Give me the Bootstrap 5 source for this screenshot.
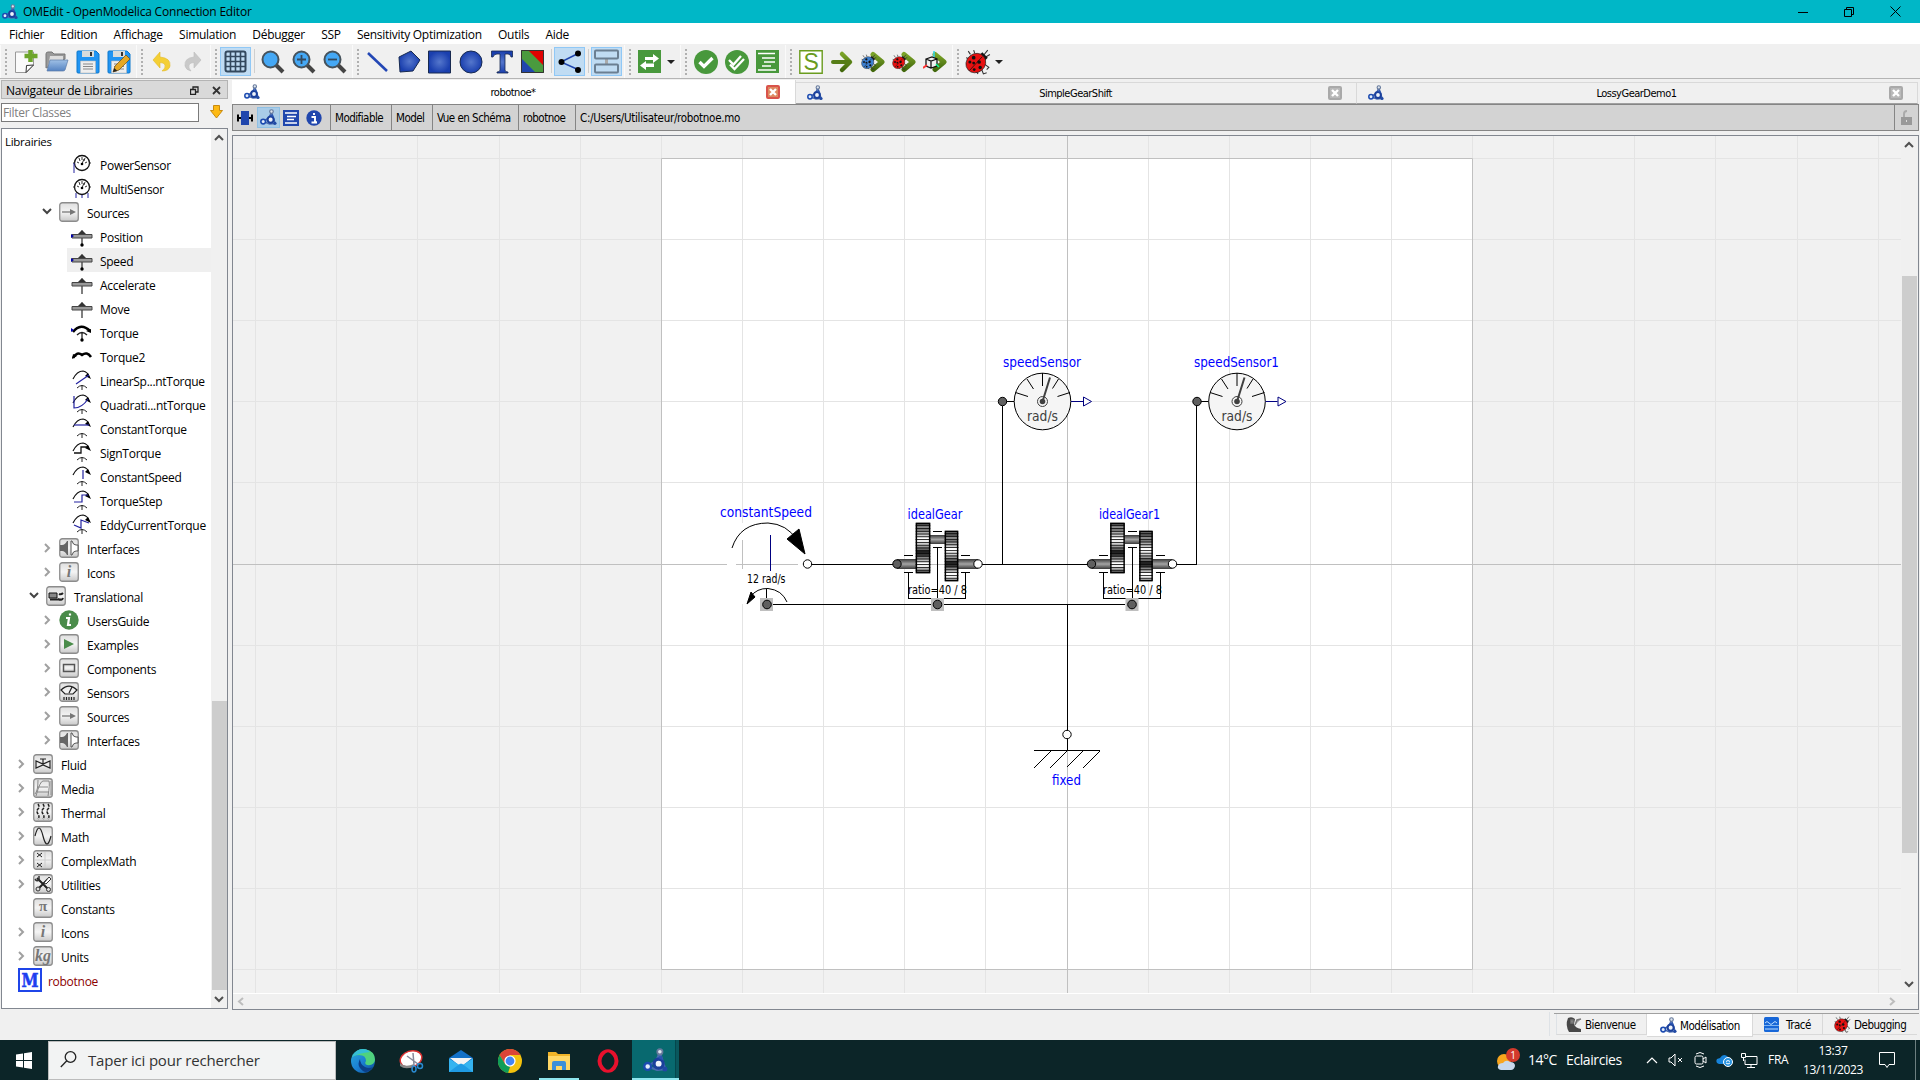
<!DOCTYPE html>
<html lang="fr">
<head>
<meta charset="utf-8">
<title>OMEdit - OpenModelica Connection Editor</title>
<link href="https://cdn.jsdelivr.net/npm/bootstrap@5.3.0/dist/css/bootstrap.min.css" rel="stylesheet">
<style>
html,body{height:1080px;overflow:hidden}
body{font-family:"Open Sans","Noto Sans",sans-serif;font-size:12px;line-height:16px;color:#000;background:#f0f0f0;letter-spacing:-.28px}
svg{display:block;flex:none}
.titlebar{height:23px;background:#00b7c7;padding-left:2px}
.titlebar .caption{margin-left:5px;letter-spacing:-.2px}
.winctl{gap:36px;padding-right:19px}
.menubar{height:22px;background:#fff;border-bottom:1px solid #f0f0f0;padding:4px 0 0 9px}
.menubar span{margin-right:16.3px;white-space:nowrap}
.toolbars{height:34px;border-bottom:1px solid #b4b4b4}
.tgroup{position:relative;padding:2px 2px 2px 9px;border-right:1px solid #b4b4b4;border-left:1px solid #fafafa;margin-left:-1px}
.tgroup::before{content:"";position:absolute;left:4px;top:4px;width:2px;height:26px;background:repeating-linear-gradient(#b0b0b0 0 2px,transparent 2px 4px)}
.tbtn{width:31px;height:29px;display:flex;align-items:center;justify-content:center}
.tbtn.pressed{background:#c0dcf3;border:1px solid #90c8f6}
.tsep{width:1px;height:24px;background:#cfcfcf;margin:2px 2px 0 3px}
.drop{width:0;border:4px solid transparent;border-top-color:#222;border-bottom:0;margin:13px 3px 0 2px}
.workarea{height:931px}
.dock{width:232px;padding-left:1px}
.docktitle{width:227px;height:19px;margin-top:1px;background:#d9d9d9;border:1px solid #b4b4b4;padding:2px 6px 0 4px}
.filterrow{height:20px;margin-top:4px;gap:11px}
.filterbox{width:198px;height:19px;background:#fff;border:1px solid #7a7a7a;color:#808080;padding:1px 1px 0;letter-spacing:-.32px}
.treebox{width:227px;height:881px;margin-top:5px;border:1px solid #828790;background:#fff}
.treehead{height:23px;padding:5px 0 0 3px;font-size:11.5px}
.tree-col{width:209px}
.leafrow{height:24px;position:relative;white-space:nowrap}
.leafrow.chosen::before{content:"";position:absolute;left:65px;right:0;top:0;bottom:0;background:#efefef}
.leafrow svg,.leafrow span{position:relative}
.leafrow span{line-height:24px;padding-top:3px}
.vbar{width:16px;background:#f0f0f0;padding:5px 0}
.thumbv{background:#cdcdcd;width:15px}
.mdi{width:1688px}
.tabstrip{height:24px;margin-top:1px;padding-right:2px}
.doctab{height:22px;margin-top:2px;width:561px;border:1px solid #d9d9d9;border-left:0;border-bottom:1px solid #a0a0a0;padding:0 14px 0 11px;font-size:11px;font-family:"DejaVu Sans Condensed","DejaVu Sans",sans-serif;letter-spacing:-.5px}
.doctab>span:not(.cross){padding-top:2px}
.doctab.current{height:24px;margin-top:0;width:564px;background:#fff;border:0;border-right:1px solid #d9d9d9;padding:0 15px 0 12px}
.cross{width:14px;height:14px;border:2px solid #a9a9a9;border-radius:2px;background:#b9b9b9}
.current .cross{border-color:#d9534a;background:#dd8860}
.pathbar{height:27px;width:1687px;border:1px solid #858585;background:#d3d3d3;font-size:11.5px;font-family:"DejaVu Sans Condensed","DejaVu Sans",sans-serif;letter-spacing:-.52px}
.pathbar .cellx{border-left:1px solid #858585;padding:5px 0 0 4px;white-space:nowrap}
.viewbtn{width:23px;height:21px;margin-top:2px;display:flex;align-items:center;justify-content:center}
.viewbtn.on{background:#a9cce8;border:1px solid #8fc0e4}
.view{width:1687px;height:875px;margin-top:4px;border:1px solid #828790}
.hbar{height:16px;border-top:1px solid #fff;padding:0 22px 0 4px}
.statusbar{height:30px}
.persp{border-top:1px solid #a0a0a0;height:24px;margin-top:3px;font-family:"DejaVu Sans Condensed","DejaVu Sans",sans-serif;font-size:11.5px;letter-spacing:-.48px}
.persp div{height:21px;border-bottom:1px solid #d9d9d9;border-right:1px solid #d9d9d9;padding-left:8px;gap:3px}
.persp span{padding-top:2px}
.persp .sel{height:23px;background:#fff}
.taskbar{height:40px;background:#0c2528;color:#fff}
.startbtn{width:48px}
.searchbox{width:288px;height:39px;margin-top:1px;background:#f2f3f3;border:1px solid #bcbcbc;color:#333;font-size:15px;padding:0 0 2px 11px;gap:11px;letter-spacing:-.2px}
.app{width:49px;height:40px;padding-top:1px}
.app.run{box-shadow:inset 0 -2px #8fe6ee}
.clock{font-size:12px;line-height:19px;width:62px;letter-spacing:-.35px}
</style>
<script src="https://cdn.jsdelivr.net/npm/bootstrap@5.3.0/dist/js/bootstrap.bundle.min.js"></script>
</head>
<body>
<svg width="0" height="0" class="position-absolute">
<defs>
<linearGradient id="metal" x2="0" y2="1"><stop stop-color="#dedede"/><stop offset=".5" stop-color="#f4f4f4"/><stop offset="1" stop-color="#c9c9c9"/></linearGradient>
<linearGradient id="shaft" x2="0" y2="1"><stop stop-color="#383838"/><stop offset=".5" stop-color="#a4a4a4"/><stop offset="1" stop-color="#383838"/></linearGradient>
<radialGradient id="bl"><stop stop-color="#5577cc"/><stop offset="1" stop-color="#1a3fae"/></radialGradient>
<linearGradient id="ga" x2="0" y2="1"><stop stop-color="#7ba428"/><stop offset="1" stop-color="#42680c"/></linearGradient>
<linearGradient id="bf" x2="0" y2="1"><stop stop-color="#9fc0e6"/><stop offset="1" stop-color="#5583c2"/></linearGradient>
<linearGradient id="ed" x2="1" y2="1"><stop stop-color="#2aa7d8"/><stop offset=".5" stop-color="#1b82d4"/><stop offset="1" stop-color="#0d4a94"/></linearGradient>
</defs>
<symbol id="om" viewBox="0 0 16 16"><path d="M10.700 3 8.500 8.500 3 11.500M10.700 3l2 6 1.500 4.500M5 12.500l4 1.500 5-.5" stroke="#4a6cb0" stroke-width="1.500" fill="none"/><circle cx="10.800" cy="2.400" r="1.700" fill="#dde5ee" stroke="#66799b" stroke-width="1.100"/><circle cx="3" cy="11.800" r="2.200" fill="#e3edfa" stroke="#1c4bb0" stroke-width="1.500"/><circle cx="10" cy="10" r="2.900" fill="#eef3fa" stroke="#1b409c" stroke-width="2"/><circle cx="14" cy="13.500" r="1.600" fill="#2049a4"/><path d="m9 6 3-1 1 3" fill="#2a54b0"/></symbol>
<symbol id="bug" viewBox="0 0 24 24"><path d="M5 5 3 2M9 4 8 1M4 9 1 8M17 6l4-5M18 8l5-3M18 14l4 3-2 2M15 18l2 5 3-1M10 20l2 3" stroke="#333" fill="none"/><path d="M16 3 21 8 18 11 13 6z" fill="#151515"/><ellipse cx="10" cy="13" rx="9.500" ry="8.600" transform="rotate(-40 10 13)" fill="currentColor" stroke="#222" stroke-width=".6"/><path d="m4 20 12-13" stroke="#111" stroke-width=".7"/><g fill="#111"><circle cx="8" cy="8" r="1.700"/><circle cx="4.500" cy="12" r="1.400"/><circle cx="8" cy="13" r="1.300"/><circle cx="13" cy="12" r="1.700"/><circle cx="14" cy="17" r="1.600"/><circle cx="8.500" cy="19" r="1.300"/></g></symbol>
<symbol id="mag" viewBox="0 0 24 24"><path d="m15 15 7 7" stroke="#444" stroke-width="4"/><circle cx="9.500" cy="9.500" r="8" fill="#45a8f5" stroke="#46525c" stroke-width="2"/></symbol>
<symbol id="arr" viewBox="0 0 24 24"><path d="m10 4.500 9 7.500-9 7.500" stroke="url(#ga)" stroke-width="5" fill="none" stroke-linecap="round" stroke-linejoin="round"/></symbol>
<symbol id="floppy" viewBox="0 0 24 24"><path d="M1 2q0-1 1-1h18l3 3v18q0 1-1 1H2q-1 0-1-1z" fill="#2094f3" stroke="#0c78cc"/><path d="M6 1h12v6H6z" fill="#d8dcdc"/><path d="M14 2h2v4h-2z" fill="#333"/><path d="M4.500 11h15v12h-15z" fill="#eee" stroke="#bbb" stroke-width=".6"/><path d="M7 14h10M7 16.500h10M7 19h10" stroke="#888"/></symbol>
<symbol id="box" viewBox="0 0 20 20"><rect x=".75" y=".75" width="18.500" height="18.500" rx="2.500" fill="url(#metal)" stroke="#8c8c8c" stroke-width="1.300"/></symbol>
</svg>

<header class="titlebar d-flex align-items-center">
  <svg width="16" height="16"><use href="#om"/></svg><span class="caption">OMEdit - OpenModelica Connection Editor</span>
  <div class="winctl d-flex ms-auto align-items-center">
    <svg width="10" height="10"><path d="M0 5.500h10" stroke="#000" transform="translate(0 -.001)"/></svg>
    <svg width="10" height="10" fill="none" stroke="#000"><path d="M.5 2.500h7v7h-7zM2.500 2.500v-2h7v7h-2"/></svg>
    <svg width="11" height="11" stroke="#000"><path d="m.5.5 10 10M10.500.5l-10 10"/></svg>
  </div>
</header>
<nav class="menubar d-flex"><span>Fichier</span><span>Edition</span><span>Affichage</span><span>Simulation</span><span>Débugger</span><span>SSP</span><span>Sensitivity Optimization</span><span>Outils</span><span>Aide</span></nav>

<div class="toolbars d-flex">
  <div class="tgroup d-flex ms-0">
    <div class="tbtn"><svg width="24" height="24"><path d="M1.500 2h18v13l-7 7.500h-11z" fill="#fafafa" stroke="#999"/><path d="m12 22.500.500-7 7-.5z" fill="#fff" stroke="#333"/><path d="M16.500 0v12M10.500 6h13" stroke="#6da52a" stroke-width="4.500"/></svg></div>
    <div class="tbtn"><svg width="24" height="24"><path d="M1 18V4q0-2 2-2h4l2 2h11v5z" fill="#999" stroke="#777"/><path d="M3 18 5 6h13v5" fill="#ddd"/><path d="M5 10h18l-3 10q-.5 1-2 1H2z" fill="url(#bf)" stroke="#5b7ba8" stroke-width=".7"/></svg></div>
    <div class="tbtn"><svg width="24" height="24"><use href="#floppy"/></svg></div>
    <div class="tbtn"><svg width="24" height="24"><use href="#floppy"/><path d="m6 22 2-6L19 5l4 4-11 11z" fill="#e7a823" stroke="#6b4d12" stroke-width=".7"/><path d="m6 22 1.300-4 3 3z" fill="#222"/></svg></div>
  </div>
  <div class="tgroup d-flex">
    <div class="tbtn"><svg width="20" height="22"><path d="M8 1v5q11 1 10 9-1 5-8 5 4-3 3-6-1-2.500-5-2.500V17L1 9z" fill="#f4cf35" stroke="#e3b824" stroke-width=".6"/></svg></div>
    <div class="tbtn"><svg width="20" height="22"><path d="M11 1v5Q1 7 2 15q1 4 6 5-3-3-2-6 1-2.500 5-2.500V17l7-8z" fill="#c9c9c9" stroke="#bcbcbc" stroke-width=".6"/></svg></div>
  </div>
  <div class="tgroup d-flex">
    <div class="tbtn pressed"><svg width="23" height="23" fill="none" stroke="#34495e" stroke-width="2"><rect x="1.500" y="1.500" width="20" height="20" rx="2"/><path d="M6.500 2v20M11.500 2v20M16.500 2v20M2 6.500h20M2 11.500h20M2 16.500h20" stroke-width="1.600"/></svg></div>
    <div class="tsep"></div>
    <div class="tbtn"><svg width="24" height="24"><use href="#mag"/></svg></div>
    <div class="tbtn"><svg width="24" height="24"><use href="#mag"/><path d="M5 9.500h9M9.500 5v9" stroke="#34495e" stroke-width="1.800"/></svg></div>
    <div class="tbtn"><svg width="24" height="24"><use href="#mag"/><path d="M5 9.500h9" stroke="#34495e" stroke-width="1.800"/></svg></div>
  </div>
  <div class="tgroup d-flex">
    <div class="tbtn"><svg width="22" height="22"><path d="m1 2 19 18" stroke="#2347b5" stroke-width="2.600"/></svg></div>
    <div class="tbtn"><svg width="24" height="24"><path d="M2 7 14 1l9 9-7 11L3 22z" fill="url(#bl)" stroke="#182a50"/></svg></div>
    <div class="tbtn"><svg width="24" height="24"><path d="M.5 1h22v22H.5z" fill="url(#bl)" stroke="#182a50"/></svg></div>
    <div class="tbtn"><svg width="24" height="24"><circle cx="12" cy="12" r="11" fill="url(#bl)" stroke="#182a50"/></svg></div>
    <div class="tbtn"><svg width="24" height="24"><path d="M1.500 1h21v6h-1.500q-.5-3-3-3h-3v16q0 2 3 2v1H7v-1q3 0 3-2V4H7Q4 4 3 7H1.500z" fill="url(#bl)" stroke="#182a50" stroke-width=".8"/></svg></div>
    <div class="tbtn"><svg width="23" height="23"><path d="M0 0h23v23H0z" fill="#4a9a3e"/><path d="M7 0h16v16z" fill="#e00000"/><path d="M0 8v15h15z" fill="#2046ad"/><path d="M.5.5h22v22H.5z" fill="none" stroke="#333"/></svg></div>
    <div class="tsep"></div>
    <div class="tbtn pressed"><svg width="24" height="24"><path d="M21 3 3 12l18 8" fill="none" stroke="#2046ad" stroke-width="1.500"/><circle cx="20" cy="3.500" r="3"/><circle cx="3.500" cy="12" r="3"/><circle cx="20" cy="20" r="3"/></svg></div>
    <div class="tsep"></div>
    <div class="tbtn pressed"><svg width="25" height="25" fill="none" stroke="#6b7f92" stroke-width="2"><path d="M12.500 9v7" stroke="#aaa" stroke-width="3"/><rect x="1" y="1.500" width="23" height="8" rx="1"/><rect x="1" y="15.500" width="23" height="8" rx="1"/></svg></div>
  </div>
  <div class="tgroup d-flex">
    <div class="tbtn"><svg width="23" height="23"><path d="M0 0h23v23H0z" fill="#48983c"/><path d="M7 7h8V4l6 4.500-6 4.500v-3H7zM16 13.500H8v-2.500l-6 4.500L8 20v-3h8z" fill="#fff"/></svg></div><div class="drop"></div>
  </div>
  <div class="tgroup d-flex">
    <div class="tbtn"><svg width="24" height="24"><circle cx="12" cy="12" r="12" fill="#48983c"/><path d="m5.500 12 4.500 4.500L18.500 8" stroke="#fff" stroke-width="3.300" fill="none"/></svg></div>
    <div class="tbtn"><svg width="24" height="24"><circle cx="12" cy="12" r="12" fill="#48983c"/><path d="m4 10 4.500 4.500L16 6M5 14.500 9.500 19 19 9" stroke="#fff" stroke-width="2.300" fill="none"/></svg></div>
    <div class="tbtn"><svg width="23" height="23"><path d="M0 0h23v23H0z" fill="#48983c"/><path d="M2 3.500h17M6 8h13M8 12h11M6 16h9M2 20h18" stroke="#fff" stroke-width="1.500"/></svg></div>
  </div>
  <div class="tgroup d-flex">
    <div class="tbtn"><svg width="24" height="24"><path d="M.8.8h22.400v22.400H.8z" fill="#fff" stroke="#6a9c1f" stroke-width="1.400"/><text x="12" y="20" text-anchor="middle" font-family="Liberation Sans" font-size="23" fill="#6a9c1f">S</text></svg></div>
    <div class="tbtn"><svg width="24" height="24"><path d="M12 4l8 8-8 8" stroke="url(#ga)" stroke-width="4.500" fill="none" stroke-linecap="round" stroke-linejoin="round"/><path d="M3 12h16v.01" stroke="#567d17" stroke-width="4" stroke-linecap="round"/></svg></div>
    <div class="tbtn"><svg width="24" height="24"><use href="#arr" x="2"/><svg width="16" height="16" x="0" y="4" color="#3c7fd0"><use href="#bug"/></svg></svg></div>
    <div class="tbtn"><svg width="24" height="24"><use href="#arr" x="2"/><svg width="16" height="16" x="0" y="4" color="#e81010"><use href="#bug"/></svg></svg></div>
    <div class="tbtn"><svg width="24" height="24"><use href="#arr" x="2"/><path d="m3 9 6-2 5 2v7l-6 2-5-2zM3 9l5 2 6-2M8 11v7" fill="none" stroke="#111" stroke-width="1.300"/><path d="M11 1v6" stroke="#30d8f0" stroke-width="1.500"/><path d="m0 18 4-3" stroke="#f33" stroke-width="2"/><path d="m13 14 3 3" stroke="#1f9" stroke-width="1.500"/></svg></div>
  </div>
  <div class="tgroup d-flex border-end-0">
    <div class="tbtn"><svg width="26" height="26" viewBox="0 0 24 24" color="#e81010"><use href="#bug" width="24" height="24"/></svg></div><div class="drop"></div>
  </div>
</div>

<main class="workarea d-flex">
  <aside class="dock">
    <div class="docktitle d-flex align-items-center"><span>Navigateur de Librairies</span>
      <svg class="ms-auto" style="margin-right:13px" width="9" height="9" fill="none" stroke="#222"><path d="M.5 3.500h5v5h-5zM3 3V1h5v5H6" stroke-width="1.300"/></svg>
      <svg width="9" height="9" stroke="#333" stroke-width="1.800"><path d="m1 1 7 7M8 1 1 8"/></svg></div>
    <div class="filterrow d-flex"><div class="filterbox">Filter Classes</div>
      <svg width="13" height="16"><path d="M3.500 2.500h6v5h3L6.500 15l-6-7.500h3z" fill="#fdb913" stroke="#c98b10"/></svg></div>
    <div class="treebox d-flex">
      <div class="tree-col"><div class="treehead">Librairies</div><div id="tree"></div></div>
      <div class="vbar d-flex flex-column align-items-center"><svg width="10" height="8" fill="none" stroke="#505050" stroke-width="2"><path d="m1 6 4-4 4 4"/></svg>
        <div class="thumbv mt-auto" style="height:289px"></div><svg class="mt-1" width="10" height="9" fill="none" stroke="#505050" stroke-width="2"><path d="m1 3 4 4 4-4"/></svg></div>
    </div>
  </aside>

  <section class="mdi">
    <div class="tabstrip d-flex">
      <div class="doctab current d-flex align-items-center justify-content-between"><svg width="16" height="16"><use href="#om"/></svg><span>robotnoe*</span><span class="cross"><svg width="10" height="10" stroke="#fff" stroke-width="2.400"><path d="m2 2 6 6M8 2 2 8"/></svg></span></div>
      <div class="doctab d-flex align-items-center justify-content-between"><svg width="16" height="16"><use href="#om"/></svg><span>SimpleGearShift</span><span class="cross"><svg width="10" height="10" stroke="#fff" stroke-width="2.400"><path d="m2 2 6 6M8 2 2 8"/></svg></span></div>
      <div class="doctab d-flex align-items-center justify-content-between"><svg width="16" height="16"><use href="#om"/></svg><span>LossyGearDemo1</span><span class="cross"><svg width="10" height="10" stroke="#fff" stroke-width="2.400"><path d="m2 2 6 6M8 2 2 8"/></svg></span></div>
    </div>
    <div class="pathbar d-flex">
      <div class="d-flex" style="width:97px">
        <div class="viewbtn"><svg width="16" height="16"><path d="M0 8h16M1 4.500v7M15 4.500v7" stroke="#000" stroke-width="2"/><path d="M4 1h8v14H4z" fill="#2046ad"/></svg></div>
        <div class="viewbtn on" style="margin-left:1px"><svg width="17" height="17"><use href="#om"/></svg></div>
        <div class="viewbtn" style="margin-left:-1px"><svg width="16" height="16"><path d="M0 0h16v16H0z" fill="#2046ad"/><path d="M2 3h12M4 6.500h9M4 9.500h7M2 13h12" stroke="#fff" stroke-width="1.300"/></svg></div>
        <div class="viewbtn"><svg width="16" height="16"><circle cx="8" cy="8" r="7.700" fill="#2046ad"/><path d="M5.500 7H9v5h1.500M5.500 12.500H11M8 3v2" stroke="#fff" stroke-width="1.900" fill="none"/></svg></div>
      </div>
      <div class="cellx" style="width:61px">Modifiable</div><div class="cellx" style="width:41px">Model</div><div class="cellx" style="width:86px">Vue en Schéma</div><div class="cellx" style="width:57px">robotnoe</div><div class="cellx flex-grow-1" style="letter-spacing:-.3px">C:/Users/Utilisateur/robotnoe.mo</div>
      <div class="cellx" style="width:24px;padding-left:6px"><svg width="12" height="16"><path d="M3 8V4q0-3 3-3" stroke="#aaa" stroke-width="2" fill="none"/><path d="M0 7h11v8H0z" fill="#999"/><path d="M5.500 10v2" stroke="#ddd"/></svg></div>
    </div>
    <div class="view">
      <div class="d-flex">
        <svg id="diagram" width="1668" height="857" viewBox="233 136 1668 857" font-family="DejaVu Sans Condensed, DejaVu Sans, sans-serif" letter-spacing="0">
          <path d="M233 136h1668v857H233z" fill="#f1f1f1"/>
          <path d="M661 158h811v811H661z" fill="#fff"/>
          <g id="gridlines" shape-rendering="crispEdges"></g>
          <path d="M661.500 158.500h811v811h-811z" fill="none" stroke="#c0c0c0"/>
          <path d="M727 523h81v81h-81z" fill="#fff"/>
          <path d="M736 564.500h62M742.500 540v29" stroke="#c0c0c0"/>
          <g stroke="#000" fill="none" shape-rendering="crispEdges"><path d="M811 564.500h82M982 564.500h106M1177 564.500h19.500V406M1002.500 406v158M773 604.500h352M1067.500 604v127"/></g>
          <g stroke="#000" fill="none"><path d="M732 548Q740 523 768 523 787 524 797 540"/><path d="m787 539 12-10 6 25z" fill="#000"/><path d="M750 597Q757 588 768 588.500 782 590 787 602M766.500 589v10"/><path d="m751 592 4 5-8 7z" fill="#000"/><path d="M770.500 535v36" stroke="#000080"/></g>
          <path d="M760 598h13v13h-13z" fill="#bfbfbf"/>
          <g stroke="#000"><circle cx="767" cy="604.500" r="4.300" fill="#606060"/><circle cx="807.500" cy="564" r="4.200" fill="#fff"/></g>
          <g fill="#00f" font-size="14.500"><text x="720" y="517" textLength="92" lengthAdjust="spacingAndGlyphs">constantSpeed</text><text x="907.500" y="519" textLength="55" lengthAdjust="spacingAndGlyphs">idealGear</text><text x="1099" y="519" textLength="61" lengthAdjust="spacingAndGlyphs">idealGear1</text><text x="1003" y="367" textLength="78" lengthAdjust="spacingAndGlyphs">speedSensor</text><text x="1194" y="367" textLength="85" lengthAdjust="spacingAndGlyphs">speedSensor1</text><text x="1052" y="785" textLength="29" lengthAdjust="spacingAndGlyphs">fixed</text></g>
          <text x="747" y="583" font-size="11.500" textLength="38.500" lengthAdjust="spacingAndGlyphs">12 rad/s</text>
          <g id="gearA">
            <g fill="url(#shaft)"><path d="M897 559h20v10h-20z"/><path d="M930 535h15v9h-15z"/><path d="M958 559h20v10h-20z"/></g>
            <g class="teeth"></g>
            <path d="M904 555.500h9M904 572.500h9M933 531.500h9M933 547.500h9M961 555.500h9M961 572.500h9M908.500 572v26.500h57V572M937.500 547v52" stroke="#000" fill="none" shape-rendering="crispEdges"/>
            <path d="M931 598h13v13h-13z" fill="#bfbfbf"/>
            <g stroke="#000"><circle cx="937.500" cy="604.500" r="4.300" fill="#606060"/><circle cx="897" cy="564" r="4.200" fill="#606060"/><circle cx="978" cy="564" r="4.200" fill="#fff"/></g>
          </g>
          <use href="#gearA" x="194.500"/>
          <g font-size="11.500"><text x="908" y="594" textLength="59" lengthAdjust="spacingAndGlyphs">ratio=40 / 8</text><text x="1103" y="594" textLength="59" lengthAdjust="spacingAndGlyphs">ratio=40 / 8</text></g>
          <g id="sensorA">
            <circle cx="1042.500" cy="401.500" r="28.300" fill="#f5f5f5" stroke="#000"/>
            <path d="M1006 401.500h8M1042.500 373v13M1027 379l6.500 10M1015.500 392.500l12.500 4M1058.500 379l-6 9.500M1070 392.500l-12.500 4" stroke="#000"/>
            <circle cx="1042.500" cy="401.500" r="5" fill="none" stroke="#404040"/><circle cx="1042.500" cy="401.500" r="2.800" fill="#404040"/><path d="m1042.500 401.500 7.500-24" stroke="#404040" stroke-width="2"/>
            <circle cx="1002.500" cy="401.500" r="4.200" fill="#606060" stroke="#000"/>
            <path d="M1071 401.500h12M1083.500 397v9l8-4.500z" stroke="#000080" fill="#fff"/>
            <text x="1027" y="421" font-size="14" fill="#404040" textLength="31" lengthAdjust="spacingAndGlyphs">rad/s</text>
          </g>
          <use href="#sensorA" x="194.500"/>
          <g stroke="#000" fill="none"><path d="M1067.500 739v11M1034 750.500h66" shape-rendering="crispEdges"/><path d="m1051 751-17 17M1067 751l-17 17M1083 751l-16 16M1100 751l-17 17"/><circle cx="1067" cy="734.500" r="4.200" fill="#fff"/></g>
        </svg>
        <div class="vbar d-flex flex-column align-items-center"><svg width="10" height="8" fill="none" stroke="#505050" stroke-width="2"><path d="m1 6 4-4 4 4"/></svg><div class="thumbv" style="height:577px;margin-top:127px"></div><svg class="mt-auto" width="10" height="8" fill="none" stroke="#505050" stroke-width="2"><path d="m1 2 4 4 4-4"/></svg></div>
      </div>
      <div class="hbar d-flex align-items-center"><svg width="7" height="9" fill="none" stroke="#bdbdbd" stroke-width="2"><path d="M6 1 2 4.500 6 8"/></svg><svg class="ms-auto" width="7" height="9" fill="none" stroke="#bdbdbd" stroke-width="2"><path d="m1 1 4 3.500L1 8"/></svg></div>
    </div>
  </section>
</main>

<div class="statusbar d-flex justify-content-end">
  <div class="border-start" style="width:5px;height:24px;margin-top:2px"></div>
  <div class="persp d-flex" style="width:365px;padding-left:2px;margin-right:1px">
    <div class="d-flex align-items-center border-start" style="width:91px"><svg width="17" height="17"><path d="M3 2q4-2 7 1l-1 5q1 4 7 5v3H4Q0 9 3 2z" fill="#484848"/><path d="m10 9 2-5 4-1M6 4h2v3H6z" stroke="#777" stroke-width="1.500" fill="#aaa"/></svg><span>Bienvenue</span></div>
    <div class="sel d-flex align-items-center" style="width:106px;padding-left:13px"><svg width="17" height="17"><use href="#om"/></svg><span>Modélisation</span></div>
    <div class="d-flex align-items-center" style="width:70px;padding-left:11px"><svg width="15" height="15"><rect width="15" height="15" rx="1.500" fill="#1767d8"/><path d="M1 6q2-3 4 0t4 0 4 0M1 12h13" stroke="#bfe0ff" fill="none"/><path d="M0 8.500h15" stroke="#7fb4f0"/></svg><span class="ms-1">Tracé</span></div>
    <div class="d-flex align-items-center border-end-0" style="width:94px;padding-left:11px"><svg width="17" height="17" color="#e81010"><use href="#bug"/></svg><span>Debugging</span></div>
  </div>
</div>

<footer class="taskbar d-flex">
  <div class="startbtn d-flex align-items-center justify-content-center"><svg width="16" height="17" fill="#fff"><path d="M0 2.500 7 1.500V8H0zM8 1.300 16 0v8H8zM0 9h7v6.500l-7-1zM8 9h8v8l-8-1.200z"/></svg></div>
  <div class="searchbox d-flex align-items-center"><svg width="17" height="17" fill="none" stroke="#222" stroke-width="1.300"><circle cx="10.500" cy="6" r="5.300"/><path d="M6.800 9.800.8 16"/></svg><span>Taper ici pour rechercher</span></div>
  <div class="d-flex" style="padding-left:2px">
    <div class="app d-flex align-items-center justify-content-center"><svg width="24" height="24"><circle cx="12" cy="12" r="12" fill="url(#ed)"/><path d="M1 8Q5-1 14 .3 24 2 24 11q-1 6-8 5-3-1-1-4 0-6-7-6Q3 6 1 8z" fill="#4fd27e"/><path d="M1 8Q5 0 12 0q4 0 7 3Q8 4 1 8z" fill="#34bdd8"/><path d="M9 10q-4 7 3 12 5 3 10-4-4 2-8 0-5-3-5-8z" fill="#0b3f88"/></svg></div>
    <div class="app d-flex align-items-center justify-content-center"><svg width="25" height="24"><ellipse cx="12" cy="10" rx="11" ry="8" fill="#fff" stroke="#d33" stroke-width="1.500" transform="rotate(-18 12 10)"/><path d="M1 14q5 5 14 1l-1 3q-8 3-13-1z" fill="#888"/><path d="m8 7 11 8M14 4l1 12" stroke="#889" stroke-width="1.500"/><g fill="none" stroke="#2a8ad0" stroke-width="1.500"><circle cx="21" cy="17" r="2.500"/><ellipse cx="15" cy="20" rx="2" ry="3"/></g></svg></div>
    <div class="app d-flex align-items-center justify-content-center"><svg width="24" height="24"><path d="M0 9 12 1l12 8v14H0z" fill="#1471c8"/><path d="M1 9h22l-11 9z" fill="#f4f4f4"/><path d="M0 9.500 12 17l12-7.500V23H0z" fill="#35b4f0"/><path d="m0 23 12-9 12 9z" fill="#1f9be4"/><path d="m4 9 8 6 8-6z" fill="#f4f4f4"/></svg></div>
    <div class="app d-flex align-items-center justify-content-center"><svg width="24" height="24"><circle cx="12" cy="12" r="12" fill="#f4c20d"/><path d="M1.600 6A12 12 0 0 1 22.400 6H12l-5 9z" fill="#db4437"/><path d="M1.600 6 7 15l5 3-2 6A12 12 0 0 1 1.600 6z" fill="#0f9d58"/><circle cx="12" cy="12" r="5.600" fill="#fff"/><circle cx="12" cy="12" r="4.400" fill="#4285f4"/></svg></div>
    <div class="app run d-flex align-items-center justify-content-center" style="width:40px;margin:0 4px 0 5px"><svg width="22" height="20"><path d="M0 1h8l2 2h12v16H0z" fill="#f0b429"/><path d="M0 5h22v14H0z" fill="#ffd766"/><path d="M4 19v-7q0-2 2-2h10q2 0 2 2v7h-4v-4H8v4z" fill="#3c8fd8"/></svg></div>
    <div class="app d-flex align-items-center justify-content-center"><svg width="24" height="24"><ellipse cx="12" cy="12" rx="8.500" ry="9.700" fill="none" stroke="#e8112d" stroke-width="4"/><ellipse cx="12" cy="12" rx="5" ry="8.800" fill="#0c2528"/></svg></div>
    <div class="app run d-flex align-items-center justify-content-center" style="width:47px;background:linear-gradient(90deg,#08696f 43px,#04474d 43px 44px,#0a575d 44px)"><svg width="25" height="25"><use href="#om"/></svg></div>
  </div>
  <div class="d-flex align-items-center ms-auto" style="padding-right:4px">
    <svg width="25" height="25" style="margin-right:7px"><circle cx="8" cy="13" r="7" fill="#f8a51d"/><path d="M5 22q-4-1-3-4 1-3 5-3 3-4 7-1 5 0 5 4-1 4-4 4z" fill="#c8d8ec"/><circle cx="17" cy="7" r="7" fill="#d33a2c"/><text x="17" y="11" font-size="10" text-anchor="middle" fill="#fff">1</text></svg>
    <span style="font-size:14px;letter-spacing:-.5px;width:38px">14°C</span><span style="font-size:14px;letter-spacing:-.4px;width:80px">Eclaircies</span>
    <svg width="12" height="8" style="margin-right:10px" fill="none" stroke="#fff" stroke-width="1.200"><path d="m1 7 5-5 5 5"/></svg>
    <svg width="16" height="14" style="margin-right:10px" fill="none" stroke="#fff"><path d="M1 5v4h2l4 4V1L3 5zM10 5l4 4M14 5l-4 4"/></svg>
    <svg width="13" height="18" style="margin-right:9px" fill="none" stroke="#fff"><rect x="1" y="5" width="8" height="8" rx="1.500"/><path d="M9 8l3-2v6l-3-2M2 3q4-3 8 0M2 15q4 3 8 0"/></svg>
    <svg width="17" height="14" style="margin-right:8px"><path d="M3 11q-4-1-2-5l3-1q3-5 7-2l3 3v5z" fill="#1683da"/><circle cx="12" cy="9" r="4.500" fill="#2a94e0" stroke="#fff"/><path d="M10 8.500q2-2 4 0M14 10q-2 2-4 0" stroke="#fff" fill="none"/></svg>
    <svg width="17" height="15" style="margin-right:10px" fill="none" stroke="#fff"><path d="M5 3.500h11v8H4v-5M10 11.500v3M6 14.500h8M.5.500h4v4h-4zM2.500 5v3"/></svg>
    <span style="width:34px">FRA</span>
    <div class="clock text-center">13:37<br>13/11/2023</div>
    <svg width="16" height="17" style="margin:0 20px 0 15px" fill="none" stroke="#fff"><path d="M.5.500h15v12H10l-2 3-2-3H.500z"/></svg>
    <div style="width:1px;height:40px;background:#6d7f80"></div>
  </div>
</footer>

<script>
// Glyphs of the library tree; "wheel" is the curved arrow that the torque sources share.
const wheel = '<path d="M2 9Q6 1 12 1q5 1 6 6" fill="none" stroke="#111" stroke-width="1.200"/><path d="m14 6 3-3 3 6z"/><path d="M6 18q5-5 10 0M11 15v5" fill="none" stroke="#222"/>';
const plain = '<use href="#box" width="20" height="20"/>';
const boxed = s => plain + s;
const dial = '<circle cx="11" cy="9" r="7.500" fill="#fff" stroke="#111" stroke-width="1.300"/><path d="M6 8l2 1M8 4l1 3M11 3v3M14 4l-1 3M16 8l-2 1M11 10l2-5M2 9h2M18 9h2" stroke="#333"/><circle cx="11" cy="10" r="1.300"/>';
const plate = '<path d="M11 4v16" stroke="#555" stroke-width="1.500"/><path d="M1 8.500h20v3.500H1z" fill="#999" stroke="#444"/><path d="m7 8 3-3h2l3 3z" fill="#333"/>';
const italic = (t, z) => `<text x="10" y="15" text-anchor="middle" font-family="Liberation Serif" font-style="italic" font-weight="bold" letter-spacing="0" font-size="${z}" fill="#777">${t}</text>`;
const blue = d => wheel + `<path d="${d}" fill="none" stroke="#2222a0" stroke-width="1.200"/>`;
const src = boxed('<path d="M3 10h9" stroke="#888" stroke-width="1.500"/><path d="m11 7 6 3-6 3z" fill="#777"/>');
const itf = boxed('<path d="M1 7h2q3 0 5-4h1v14H8q-2-4-5-4H1z" fill="#666"/><path d="M19 7h-2q-3 0-4-4h-1v14h1q1-4 4-4h2z" fill="#fff" stroke="#555"/>');
const pin = '<circle cx="11" cy="19" r="1.700"/><path d="m0 8 3 2-3 2z" fill="#00a"/>';
const rows = [
 ['PowerSensor',4,dial+'<path d="M3 9v10" stroke="#2222a0"/>'],['MultiSensor',4,dial+'<path d="M5 15v5M17 15v5M11 17v3" stroke="#2222a0"/>'],
 ['Sources',3,src,'v'],
 ['Position',4,plate+pin],['Speed',4,plate+pin,'',1],['Accelerate',4,plate],['Move',4,plate],
 ['Torque',4,'<path d="M2 10q8-10 17-1" fill="none" stroke="#000" stroke-width="2.500"/><path d="m15 9 5-2v4z"/><path d="M6 13q5-5 10 0M11 10v8" fill="none" stroke="#222" stroke-width="1.300"/><circle cx="11" cy="18" r="1.700"/><path d="m0 6 3 2-3 2z" fill="#00a"/>'],
 ['Torque2',4,'<path d="M2 12q4-7 9-3 5-4 9 2" fill="none" stroke="#000" stroke-width="2.500"/><path d="m1 13 1-5 4 2z"/>'],
 ['LinearSp...ntTorque',4,blue('M5 14 18 5')],['Quadrati...ntTorque',4,blue('M3 2v12q8 0 14-9')],['ConstantTorque',4,blue('M3 7h15')],
 ['SignTorque',4,wheel+'<path d="M3 11h7V5h6" fill="none" stroke="#111" stroke-width="1.300"/>'],['ConstantSpeed',4,blue('M12 4v9')],['TorqueStep',4,blue('M3 12h8V5h6')],['EddyCurrentTorque',4,blue('M3 11l7 3V6l8 3')],
 ['Interfaces',3,itf,'>'],['Icons',3,boxed(italic('i',16)),'>'],
 ['Translational',2,boxed('<path d="M3 7h8v5H3z" fill="#888" stroke="#111"/><path d="M12 13q4 2 5-1M13 8q2 1 4-1M4 13.500h11" stroke="#222" stroke-width="2" fill="none"/>'),'v'],
 ['UsersGuide',3,'<circle cx="10" cy="10" r="9.700" fill="#4a8c4a"/><path d="M7 8h3l-1 7h3M11 3.500v2" stroke="#fff" stroke-width="2.200" fill="none"/>','>'],
 ['Examples',3,boxed('<path d="m5 5 10 5-10 5z" fill="#4a8c4a"/>'),'>'],['Components',3,boxed('<rect x="4.500" y="6.500" width="11" height="7" fill="url(#metal)" stroke="#555" stroke-width="1.500"/>'),'>'],
 ['Sensors',3,boxed('<path d="M2 8q8-8 16 0l-4 4H6zM10 11l3-6M5 15v3M7.500 15v3M10 15v3M12.500 15v3M15 15v3" fill="none" stroke="#222" stroke-width="1.200"/>'),'>'],
 ['Sources',3,src,'>'],['Interfaces',3,itf,'>'],
 ['Fluid',1,boxed('<path d="M3 7v7l7-3 7 3V7l-7 3zM10 10V5M7 5h6" fill="#eee" stroke="#222" stroke-width="1.200"/>'),'>'],
 ['Media',1,boxed('<path d="M3 18Q7 3 10 3h6q1 3-1 15M5 9h10M4 14h12M2 16q3-3 3-14M18 3v14" fill="none" stroke="#888"/>'),'>'],
 ['Thermal',1,boxed('<path d="M5 2q2 3 0 5t0 5 0 5M10 2q2 3 0 5t0 5 0 5M15 2q2 3 0 5t0 5 0 5" fill="none" stroke="#222" stroke-width="1.500" stroke-dasharray="3 1"/>'),'>'],
 ['Math',1,boxed('<path d="M2 10Q6-6 10 10t8 0" fill="none" stroke="#222" stroke-width="1.200"/>'),'>'],
 ['ComplexMath',1,boxed('<path d="M2 10h16M12 2v16" stroke="#ccc"/><path d="m4 3 5 4M9 3 4 7M4 13l5 4M9 13l-5 4" stroke="#222"/>'),'>'],
 ['Utilities',1,boxed('<path d="m4 4 12 12M5 15 15 5" stroke="#222" stroke-width="2"/><path d="m11 9 5-6 2 2-5 5z" fill="#fff" stroke="#333"/><path d="M2 5q2 3 4 1V2" fill="none" stroke="#333" stroke-width="1.500"/><circle cx="5" cy="15" r="2" fill="#ddd" stroke="#333"/><circle cx="15.500" cy="15.500" r="2" fill="#ddd" stroke="#333"/>'),'>'],
 ['Constants',1,boxed('<text x="10" y="13" text-anchor="middle" font-family="Liberation Serif" font-weight="bold" letter-spacing="0" font-size="15" fill="#777">π</text>')],
 ['Icons',1,boxed(italic('i',16)),'>'],['Units',1,boxed(italic('kg',16)),'>'],
 ['robotnoe',0,'<path d="M1 1h22v22H1z" fill="#fff" stroke="#1f45e8" stroke-width="2"/><text x="12" y="19" text-anchor="middle" font-family="DejaVu Serif" font-weight="bold" letter-spacing="0" font-size="19" textLength="17" lengthAdjust="spacingAndGlyphs" fill="#1f3ff0" stroke="#1f3ff0" stroke-width=".6">M</text>']
];
const iconX = [16,31,44,57,69], textX = [46,59,72,85,98], size = [24,20,20,20,22];
document.getElementById('tree').innerHTML = rows.map(([name,lvl,icon,mark,sel]) => {
  const chev = mark ? `<svg width="10" height="10" fill="none" stroke="${mark==='v'?'#444':'#a0a0a0'}" stroke-width="2" style="margin-left:${iconX[lvl]-17}px;margin-right:7px"><path d="${mark==='v'?'m1 2 4 4 4-4':'m3 1 4 4-4 4'}"/></svg>` : `<div style="width:${iconX[lvl]}px"></div>`;
  const w = size[lvl];
  return `<div class="leafrow d-flex align-items-center${sel?' chosen':''}">${chev}<svg width="${w}" height="${lvl===4?21:w}" style="margin-right:${textX[lvl]-iconX[lvl]-w}px">${icon}</svg><span${lvl===0?' style="color:#8b0000"':''}>${name}</span></div>`;
}).join('');

// Canvas grid: one line every ten units, with darker lines through the origin.
let g = '';
for (const x of [255,336,417,499,580,661,742,823,904,985,1148,1229,1310,1391,1472,1553,1634,1715,1797,1878]) g += `<path d="M${x}.5 136v857" stroke="#e4e4e4"/>`;
for (const y of [158,239,320,401,482,645,726,807,888,969]) g += `<path d="M233 ${y}.5h1668" stroke="#e4e4e4"/>`;
g += '<path d="M1067.500 136v857M233 564.500h1668" stroke="#c0c0c0"/>';
document.getElementById('gridlines').innerHTML = g;

// Gear teeth, shaded from the rim to the middle of each wheel.
const shades = ['#555','#888','#777','#aaa','#ccc','#fff','#eee','#ccc','#999','#666','#222','#333','#888','#bbb','#fff','#eee','#aaa','#666'];
const teeth = (x,y,w,o) => shades.map((s,i) => `<rect x="${x}" y="${y+i*50/18}" width="${w}" height="2.800" fill="${shades[(i+o)%18]}" stroke="#000" stroke-width=".65"/>`).join('') + `<rect x="${x+.5}" y="${y+.5}" width="${w-1}" height="49" fill="none" stroke="#000" stroke-width="1.200"/>`;
document.querySelector('.teeth').innerHTML = teeth(916,523,14,0) + teeth(945,531,13,17);
</script>
</body>
</html>
